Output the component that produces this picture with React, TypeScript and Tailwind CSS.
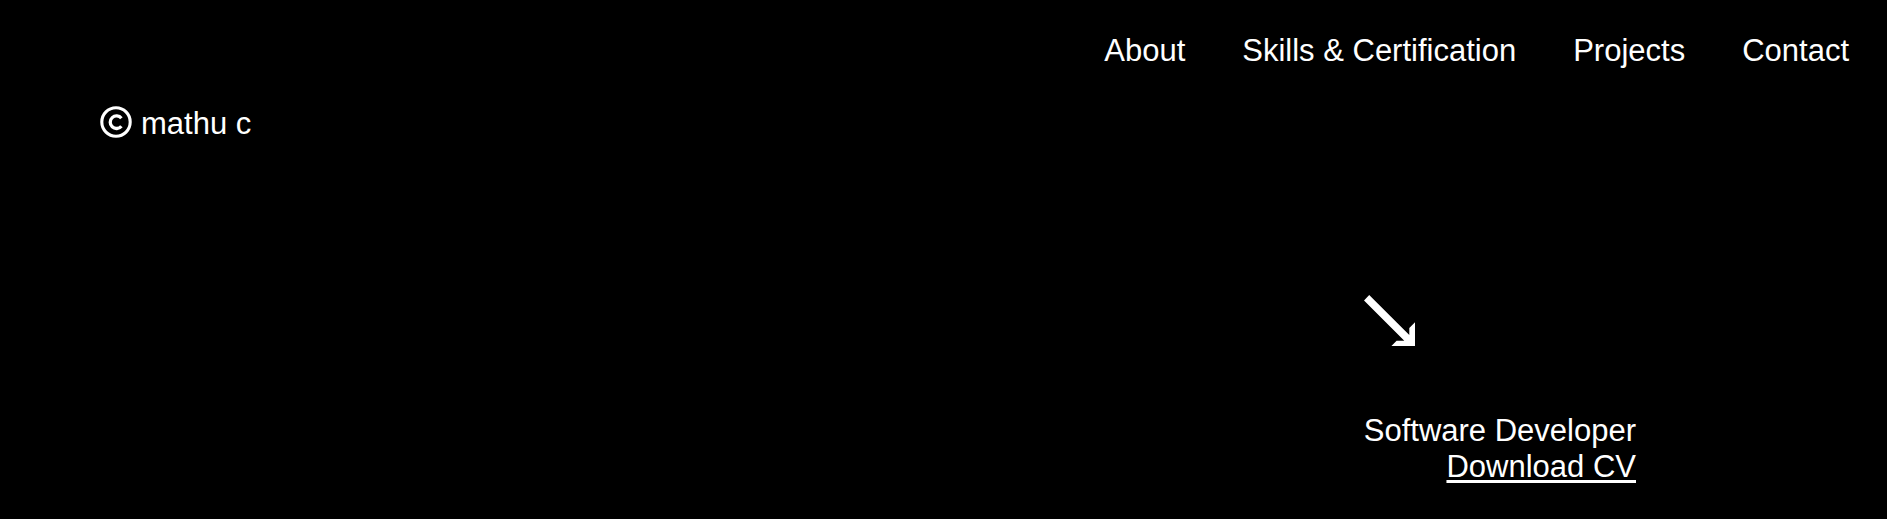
const links = [
  { label: "About", href: "#about" },
  { label: "Skills & Certification", href: "#skills" },
  { label: "Projects", href: "#projects" },
  { label: "Contact", href: "#contact" },
];

function CopyrightIcon() {
  return (
    <svg className="size-8" viewBox="0 0 32 32" fill="none" stroke="currentColor" aria-hidden="true">
      <circle cx="16" cy="16" r="14.2" strokeWidth="3.1" />
      <path d="M21.4 12.2A6.3 6.3 0 1 0 21.4 20.2" strokeWidth="3.3" />
    </svg>
  );
}

function ArrowIcon() {
  return (
    <svg className="size-[51px]" viewBox="0 0 51 51" fill="currentColor" aria-hidden="true">
      <path d="M5.2 0L45.3 40.1V33L51 27.3V51H27.4L32.6 45.8H40.3L0 5.5Z" />
    </svg>
  );
}

export default function App() {
  return (
    <div className="min-h-screen bg-black font-['Liberation_Sans',Arial,sans-serif] text-[31px] leading-9 text-white">
      <header className="pt-[33px]">
        <nav aria-label="Main" className="flex justify-end gap-[57px] pr-[38px]">
          {links.map((link) => (
            <a key={link.href} href={link.href}>
              {link.label}
            </a>
          ))}
        </nav>
        <p className="mt-[37px] flex items-start gap-[9px] pl-[100px]">
          <CopyrightIcon />
          <span>mathu c</span>
        </p>
      </header>
      <main className="flex justify-end pt-[153px] pr-[251px]">
        <section className="flex flex-col">
          <ArrowIcon />
          <h1 className="mt-[67px]">Software Developer</h1>
          <a href="#cv" className="self-end underline decoration-[3px] underline-offset-[3px]">
            Download CV
          </a>
        </section>
      </main>
    </div>
  );
}
